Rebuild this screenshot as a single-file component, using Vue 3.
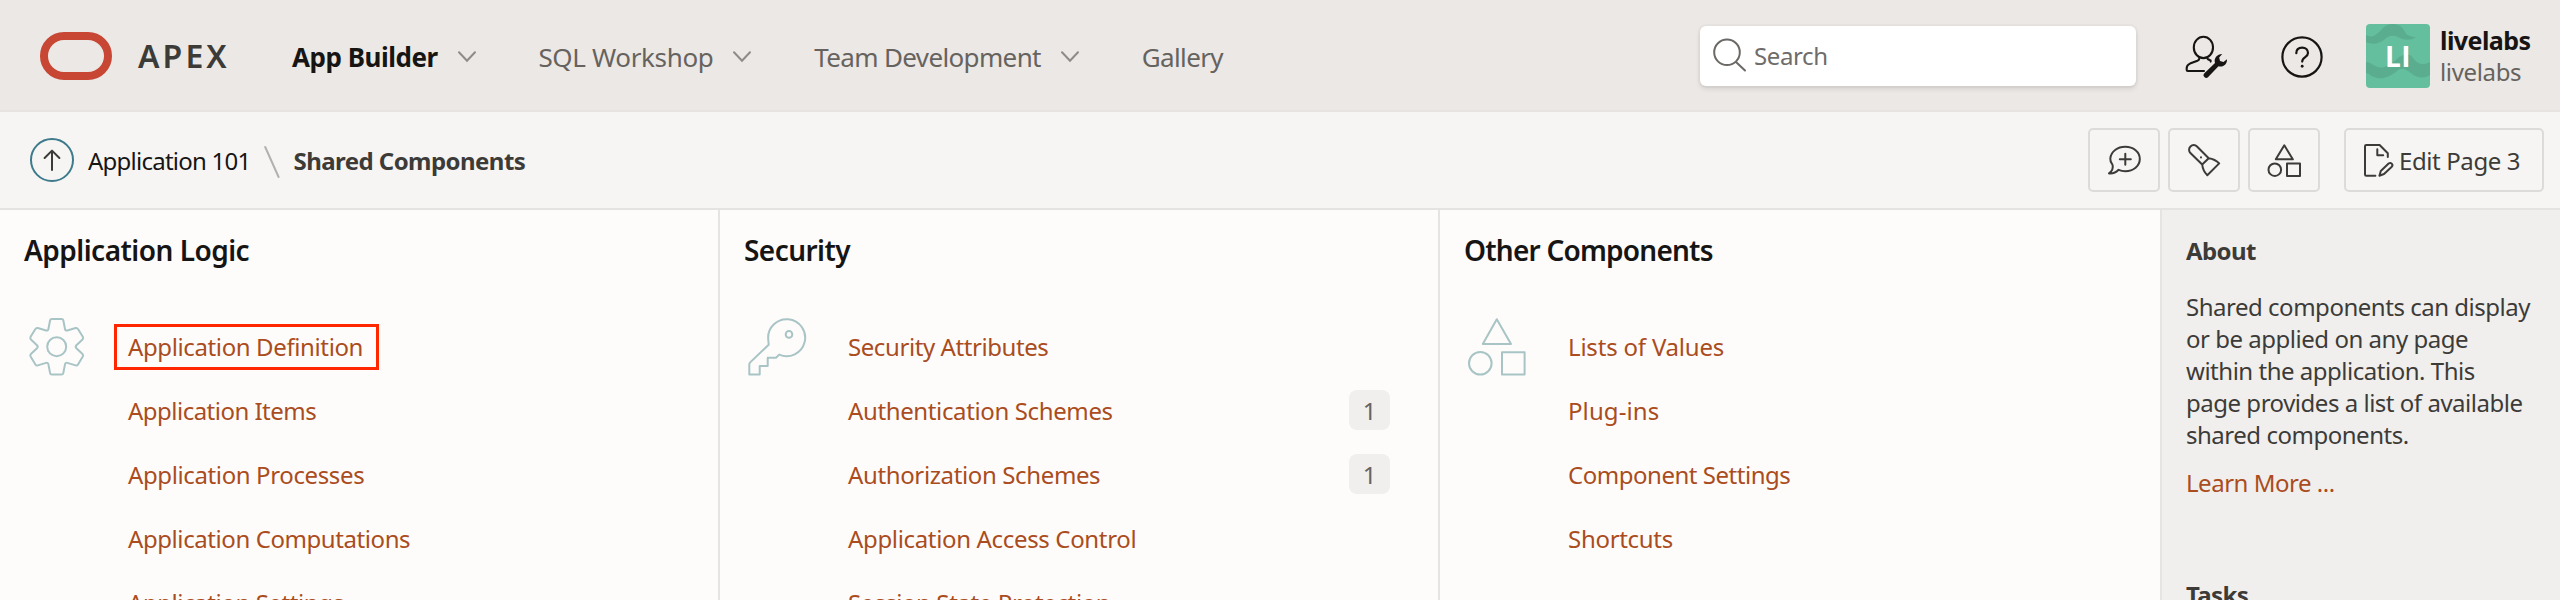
<script setup>
const nav = [
  { label: 'App Builder', menu: true, active: true, cls: 'n-app' },
  { label: 'SQL Workshop', menu: true, cls: 'n-sql' },
  { label: 'Team Development', menu: true, cls: 'n-team' },
  { label: 'Gallery', menu: false, cls: 'n-gallery' }
]

const columns = [
  {
    title: 'Application Logic',
    icon: 'gear',
    links: [
      { label: 'Application Definition', tracking: -0.38, marked: true },
      { label: 'Application Items', tracking: -0.52 },
      { label: 'Application Processes', tracking: -0.38 },
      { label: 'Application Computations', tracking: -0.42 },
      { label: 'Application Settings', tracking: -0.42 }
    ]
  },
  {
    title: 'Security',
    icon: 'key',
    links: [
      { label: 'Security Attributes', tracking: -0.42 },
      { label: 'Authentication Schemes', tracking: -0.37 },
      { label: 'Authorization Schemes', tracking: -0.37 },
      { label: 'Application Access Control', tracking: -0.34 },
      { label: 'Session State Protection', tracking: -0.39 }
    ].map((l) => (/Schemes$/.test(l.label) ? { ...l, count: 1 } : l))
  },
  {
    title: 'Other Components',
    icon: 'shapes',
    links: [
      { label: 'Lists of Values', tracking: -0.2 },
      { label: 'Plug-ins', tracking: 0.1 },
      { label: 'Component Settings', tracking: -0.47 },
      { label: 'Shortcuts', tracking: -0.3 }
    ]
  }
]

const about = [
  'Shared components can display',
  'or be applied on any page',
  'within the application. This',
  'page provides a list of available',
  'shared components.'
]
</script>

<template>
  <div class="page">
    <header class="top">
      <svg class="logo" width="72" height="48" viewBox="0 0 72 48">
        <rect x="4" y="4" width="64" height="40" rx="20" fill="none" stroke="#c74634" stroke-width="8" />
      </svg>
      <span class="brand">APEX</span>
      <nav class="nav">
        <a v-for="n in nav" :key="n.label" class="nav-item" :class="[n.cls, { active: n.active }]">
          <span>{{ n.label }}</span>
          <svg v-if="n.menu" width="18" height="12" viewBox="0 0 18 12">
            <path d="M1 1.2 9 9.8 17 1.2" fill="none" stroke="#8f8b88" stroke-width="2" stroke-linecap="round" />
          </svg>
        </a>
      </nav>
      <div class="search">
        <svg width="34" height="34" viewBox="0 0 34 34" fill="none" stroke="#6b6865" stroke-width="2" stroke-linecap="round">
          <circle cx="14" cy="14.3" r="12.8" />
          <path d="M23 24 32 32.5" />
        </svg>
        <span>Search</span>
      </div>
      <svg class="admin" width="44" height="46" viewBox="0 0 44 46">
        <g fill="none" stroke="#161513" stroke-width="2.1" stroke-linecap="round" stroke-linejoin="round">
          <ellipse cx="19.4" cy="13.4" rx="9.6" ry="10.7" />
          <path d="M15.3 23.8V24.6Q15.2 26 13.4 26.8L6 29.6Q2.7 31 2.7 34V36Q2.7 37 3.8 37H20M23.3 23.8V24.4Q23.6 25.4 26.6 26.4V27.6" />
        </g>
        <path fill="#161513" d="M38.2 20C33 20 29.5 24.5 31 29L20.4 39.2A2.6 2.6 0 0 0 24.2 43L34.5 32.2C39 33.7 43.6 30 42.9 25.2L39.5 28 36 27 35.2 23.5Z" />
      </svg>
      <svg class="help" width="42" height="42" viewBox="0 0 42 42" fill="none" stroke="#161513" stroke-width="2.2" stroke-linecap="round">
        <circle cx="21" cy="21" r="19.6" />
        <path d="M15.3 17.2C15.3 13.6 17.8 11.6 21.2 11.6S27 13.9 27 17C27 21.3 21.2 20.8 21.2 25.6" />
        <path d="M21.2 30.2V30.3" stroke-width="2.8" />
      </svg>
      <div class="avatar">
        <svg class="waves" width="64" height="64" viewBox="0 0 64 64" fill="#5aae8f">
          <path d="M0 11C7 15 11 10 16 5 20 0 27-1 32 1 39 3 38 11 44 12 46 13 48 13 50 13 45 17 38 16 34 14 28 11 24 11 19 15 14 20 6 21 0 18Z" />
          <path d="M0 38C5 38 8 42 12 43 20 45 26 39 32 34 37 30 44 29 47 34 51 40 57 42 64 38V51C57 55 51 54 46 50 40 45 36 43 31 47 23 54 14 56 8 53 4 52 3 49 0 49Z" />
        </svg>
        <span>LI</span>
      </div>
      <div class="account">
        <strong>livelabs</strong>
        <span>livelabs</span>
      </div>
    </header>

    <div class="bar">
      <svg class="up" width="44" height="44" viewBox="0 0 44 44" fill="none" stroke-linecap="round" stroke-linejoin="round">
        <circle cx="22" cy="22" r="21" stroke="#3c7a8c" stroke-width="2" />
        <path d="M22 32V12.8M14.6 20 22 12.6 29.4 20" stroke="#3d3b38" stroke-width="2" />
      </svg>
      <span class="crumb">Application 101</span>
      <svg class="slash" width="18" height="34" viewBox="0 0 18 34">
        <path d="M2.2 2 15.6 32" stroke="#b3b1af" stroke-width="2" stroke-linecap="round" />
      </svg>
      <span class="crumb current">Shared Components</span>

      <div class="actions">
        <button class="btn">
          <svg width="32" height="32" viewBox="0 0 32 32">
            <path d="M4.6 21C3 19 2.1 17 2.3 14.5 3 7.5 9.5 2.8 17.2 2.8 25.5 2.8 31.8 8 31.8 15S25.5 27.2 17.2 27.2C14.6 27.2 12.6 26.7 10.6 25.8 8 28.6 4.8 29.8 1 29.4 3.8 27.4 5.4 24.5 4.6 21ZM17.3 9.8V20.8M11.8 15.3H22.8" />
          </svg>
        </button>
        <button class="btn">
          <svg width="32" height="32" viewBox="0 0 32 32">
            <path d="M9 2.5 20.7 14.2 14.2 20.5 2.4 9A4.6 4.6 0 0 1 9 2.5ZM20.7 14.2C25 14.8 28.4 16.5 31.2 19.4L19.3 31.2C16 28 14.6 24.5 14.2 20.5M13 13.3V13.4" />
          </svg>
        </button>
        <button class="btn">
          <svg width="32" height="32" viewBox="0 0 32 32">
            <path d="M16.3 1.3 24.8 15.3H7.8ZM19 19.6H32V31.9H19Z" />
            <circle cx="6.8" cy="25.7" r="6.3" />
          </svg>
        </button>
        <button class="btn edit">
          <svg width="30" height="32" viewBox="0 0 30 32">
            <path d="M11.4 31.7H2.3Q1 31.7 1 30.4V2.3Q1 1 2.3 1H15.6L23.8 9.2V13M13.3 5.2V11.2H19.2M15.4 31.7 16.8 27 24.6 19.6C26.8 17.8 29.6 20.4 27.8 22.7L20 30Z" />
          </svg>
          <span>Edit Page 3</span>
        </button>
      </div>
    </div>

    <main class="body">
      <section v-for="c in columns" :key="c.title" class="col">
        <h2 :class="c.icon">{{ c.title }}</h2>
        <div class="group">
          <svg class="big" width="58" height="58" viewBox="0 0 58 58" fill="none" stroke="#a9c4c5" stroke-width="2" stroke-linejoin="round">
            <template v-if="c.icon === 'gear'">
              <path d="M24 .9H33.4Q35 .9 35.3 2.3L37 11Q37.4 13 39.3 12.5L47.6 10Q49.2 9.6 50 11L54.8 18.8Q55.6 20.2 54.5 21.5L48.4 27.2Q47 28.7 48.4 30.2L54.5 35.9Q55.6 37.2 54.8 38.6L50 46.4Q49.2 47.8 47.6 47.4L39.3 44.9Q37.4 44.4 37 46.4L35.3 55.1Q35 56.5 33.4 56.5H24Q22.4 56.5 22.1 55.1L20.4 46.4Q20 44.4 18.1 44.9L9.8 47.4Q8.2 47.8 7.4 46.4L2.6 38.6Q1.8 37.2 2.9 35.9L9 30.2Q10.4 28.7 9 27.2L2.9 21.5Q1.8 20.2 2.6 18.8L7.4 11Q8.2 9.6 9.8 10L18.1 12.5Q20 13 20.4 11L22.1 2.3Q22.4 .9 24 .9Z" />
              <circle cx="28.7" cy="28.7" r="9.5" />
            </template>
            <template v-else-if="c.icon === 'key'">
              <path d="M20.7 26.7 2.2 44.4Q1.3 45.3 1.3 46.6V56.5H11.7V48H19.7V39.7H28L31.2 36.6A18.5 18.5 0 1 0 20.2 21Z" />
              <circle cx="41" cy="16.4" r="3.3" />
            </template>
            <template v-else>
              <path d="M28.8 1.2 43 26H14.8ZM34 34.2H56.6V56.5H34Z" />
              <circle cx="12.3" cy="45.2" r="11.3" />
            </template>
          </svg>
          <ul class="links">
            <li v-for="l in c.links" :key="l.label">
              <a :class="{ marked: l.marked }" :style="{ letterSpacing: l.tracking + 'px' }">{{ l.label }}</a>
              <span v-if="l.count" class="badge">{{ l.count }}</span>
            </li>
          </ul>
        </div>
      </section>
      <aside class="side">
        <h3>About</h3>
        <p><span v-for="line in about" :key="line">{{ line }}</span></p>
        <a class="more">Learn More ...</a>
        <h3 class="tasks">Tasks</h3>
      </aside>
    </main>
  </div>
</template>

<style>
body {
  margin: 0;
  overflow: hidden;
}
</style>

<style scoped>
.page {
  width: 2560px;
  height: 600px;
  overflow: hidden;
  display: flex;
  flex-direction: column;
  box-sizing: border-box;
  background: #fdfcfb;
  font-family: "Noto Sans", "Open Sans", sans-serif;
  font-size: 24px;
  line-height: 32px;
  color: #3d3b38;
  white-space: nowrap;
}
.page *,
.page *::after {
  box-sizing: border-box;
}
svg {
  display: block;
  flex: none;
  overflow: visible;
}

.top {
  flex: none;
  display: flex;
  align-items: center;
  height: 112px;
  padding: 0 0 0 40px;
  background: #ece8e5;
  border-bottom: 2px solid #e6e3e0;
}
.logo {
  margin-top: 2px;
}
.brand {
  width: 154px;
  margin: 2px 0 0 26px;
  font-size: 32px;
  font-weight: 600;
  letter-spacing: 3.1px;
}
.nav {
  display: flex;
  gap: 62.8px;
  margin-top: 3px;
  font-size: 26px;
  color: #66635f;
}
.nav-item {
  display: flex;
  align-items: center;
  gap: 20px;
}
.n-app { letter-spacing: -0.48px; }
.n-sql { letter-spacing: -0.35px; }
.n-team { letter-spacing: -0.64px; }
.n-gallery { letter-spacing: -0.6px; }
.active {
  font-weight: 700;
  color: #161513;
}
.search {
  display: flex;
  align-items: center;
  gap: 6px;
  width: 436px;
  height: 60px;
  margin-top: 2px;
  margin-left: auto;
  padding-left: 13px;
  border-radius: 6px;
  background: #fff;
  color: #6f6c69;
  letter-spacing: -0.4px;
  box-shadow: 0 0 0 2px rgba(0, 0, 0, 0.025), 0 3px 5px rgba(0, 0, 0, 0.1);
}
.search svg {
  margin-top: -2px;
}
.search span {
  margin-left: 1px;
}
.admin {
  margin: 4px 0 0 48px;
}
.help {
  margin: 4px 0 0 53px;
}
.avatar {
  position: relative;
  display: flex;
  align-items: center;
  justify-content: center;
  width: 64px;
  height: 64px;
  margin: 2px 0 0 43px;
  border-radius: 4px;
  overflow: hidden;
  background: #64bf9e;
  color: #fff;
  font-family: "Open Sans", sans-serif;
  font-size: 28px;
  font-weight: 700;
  letter-spacing: 0.4px;
}
.waves {
  position: absolute;
  inset: 0;
}
.avatar span {
  position: relative;
}
.account {
  display: flex;
  flex-direction: column;
  width: 120px;
  margin: 2px 0 0 10px;
  color: #66635f;
  letter-spacing: -0.35px;
}
.account strong {
  font-size: 25px;
  font-weight: 700;
  color: #161513;
  letter-spacing: -0.55px;
}

.bar {
  flex: none;
  display: flex;
  align-items: center;
  height: 98px;
  padding: 0 16px 0 30px;
  background: #f6f5f3;
  border-bottom: 2px solid #e5e3e1;
}
.crumb {
  margin-left: 14px;
  margin-top: 2px;
  color: #161513;
  letter-spacing: -0.76px;
}
.slash {
  margin: 3px 0 0 13px;
}
.crumb.current {
  margin-left: 12px;
  font-weight: 700;
  color: #3d3b38;
  letter-spacing: -0.55px;
}
.actions {
  display: flex;
  gap: 8px;
  margin-left: auto;
}
.btn {
  display: flex;
  align-items: center;
  justify-content: center;
  width: 72px;
  height: 64px;
  padding: 0;
  border: 2px solid #dcdbd9;
  border-radius: 5px;
  background: transparent;
  color: #3d3b38;
  font: inherit;
}
.btn svg {
  fill: none;
  stroke: #3d3b38;
  stroke-width: 2;
  stroke-linecap: round;
  stroke-linejoin: round;
}
.btn.edit {
  width: 200px;
  margin-left: 16px;
  padding-left: 18px;
  justify-content: flex-start;
  letter-spacing: -0.4px;
}
.edit span {
  margin: 2px 0 0 5px;
}

.body {
  flex: 1;
  min-height: 0;
  display: flex;
}
.col {
  width: 720px;
  border-right: 2px solid #e5e4e2;
  padding: 20px 48px 0 24px;
}
.col:nth-child(3) {
  width: 722px;
}
h2 {
  margin: 0;
  font-size: 28px;
  line-height: 40px;
  font-weight: 600;
  color: #161513;
}
h2.gear { letter-spacing: -0.52px; }
h2.key { letter-spacing: -0.55px; }
h2.shapes { letter-spacing: -0.78px; }
.group {
  display: flex;
  margin-top: 44px;
}
.big {
  margin: 4px 42px 0 4px;
}
.links {
  flex: 1;
  margin: 0;
  padding: 0;
  list-style: none;
}
.links li {
  display: flex;
  align-items: center;
  justify-content: space-between;
  height: 64px;
}
.links a {
  padding-top: 2px;
}
.links a,
.more {
  color: #aa4c20;
}
.marked {
  position: relative;
}
.marked::after {
  content: "";
  position: absolute;
  left: -14.5px;
  top: -5.5px;
  width: 265px;
  height: 46px;
  border: 3px solid #ff2600;
}
.badge {
  width: 41px;
  height: 40px;
  border-radius: 8px;
  background: #f0efee;
  color: #66635f;
  line-height: 41px;
  text-align: center;
}

.side {
  flex: 1;
  padding: 25px 0 0 24px;
  background: #f0efed;
}
h3 {
  margin: 0;
  font-size: 24px;
  line-height: 32px;
  font-weight: 700;
  letter-spacing: -0.6px;
}
.side p {
  margin: 24px 0 16px;
  letter-spacing: -0.48px;
}
.side p span {
  display: block;
}
.more {
  display: block;
  letter-spacing: -0.48px;
}
.tasks {
  margin-top: 80px;
}
</style>
